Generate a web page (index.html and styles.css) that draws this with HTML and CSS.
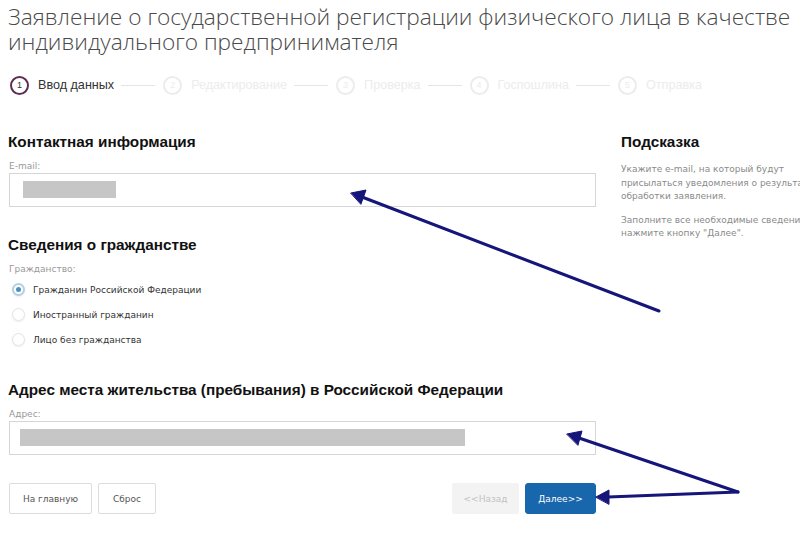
FILE: index.html
```html
<!DOCTYPE html>
<html lang="ru">
<head>
    <meta charset="UTF-8">
    <title>Заявление о государственной регистрации</title>
    <link rel="stylesheet" href="styles.css">
</head>
<body>
    <div class="page">
        <h1 class="title">Заявление о государственной регистрации физического лица в качестве индивидуального предпринимателя</h1>

        <div class="steps">
            <div class="step active"><span class="num">1</span>Ввод данных</div>
            <span class="sep"></span>
            <div class="step"><span class="num">2</span>Редактирование</div>
            <span class="sep"></span>
            <div class="step"><span class="num">3</span>Проверка</div>
            <span class="sep"></span>
            <div class="step"><span class="num">4</span>Госпошлина</div>
            <span class="sep"></span>
            <div class="step"><span class="num">5</span>Отправка</div>
        </div>

        <div class="layout">
            <div class="form">
                <div class="block">
                    <h2>Контактная информация</h2>
                    <div class="label">E-mail:</div>
                    <div class="input"><span class="mask" style="width: 93px"></span></div>
                </div>

                <div class="block">
                    <h2>Сведения о гражданстве</h2>
                    <div class="label">Гражданство:</div>
                    <div class="radio checked"><span class="dot"></span>Гражданин Российской Федерации</div>
                    <div class="radio"><span class="dot"></span>Иностранный гражданин</div>
                    <div class="radio"><span class="dot"></span>Лицо без гражданства</div>
                </div>

                <div class="block">
                    <h2>Адрес места жительства (пребывания) в Российской Федерации</h2>
                    <div class="label">Адрес:</div>
                    <div class="input address"><span class="mask" style="width: 445px"></span></div>
                </div>

                <div class="actions">
                    <button class="btn home">На главную</button>
                    <button class="btn reset">Сброс</button>
                    <span class="spacer"></span>
                    <button class="btn disabled">&lt;&lt;Назад</button>
                    <button class="btn primary">Далее&gt;&gt;</button>
                </div>
            </div>

            <div class="hint">
                <h2>Подсказка</h2>
                <p>Укажите e-mail, на который будут<br>присылаться уведомления о результатах<br>обработки заявления.</p>
                <p>Заполните все необходимые сведения и<br>нажмите кнопку "Далее".</p>
            </div>
        </div>

        <svg class="arrows" viewBox="0 0 800 536" width="800" height="536">
            <g stroke="#15157a" stroke-width="3" stroke-linecap="round" fill="#15157a">
                <line x1="659" y1="311" x2="362" y2="197"/>
                <polygon points="351,193 366,190 361,204" stroke-width="1"/>
                <line x1="738" y1="492" x2="579" y2="438"/>
                <polygon points="567,434 582,431 578,445" stroke-width="1"/>
                <line x1="738" y1="492" x2="608" y2="497"/>
                <polygon points="596,497 609,490 609,504" stroke-width="1"/>
            </g>
        </svg>
    </div>
</body>
</html>
```

FILE: styles.css
```css
body {
    margin: 0;
    padding: 0;
    background-color: #fff;
    font-family: "DejaVu Sans", Tahoma, sans-serif;
    color: #333;
    overflow: hidden;
}

.page {
    position: relative;
    width: 800px;
    height: 536px;
    padding: 4px 0 0 8px;
    box-sizing: border-box;
    overflow: hidden;
}

.title {
    margin: 0;
    font-family: "Open Sans", sans-serif;
    font-weight: 300;
    font-size: 22.7px;
    line-height: 25px;
    color: #4a4a4a;
    width: 790px;
}

.steps {
    display: flex;
    align-items: center;
    margin-top: 21px;
    height: 20px;
    font-family: "Liberation Sans", Arial, sans-serif;
    font-size: 12.6px;
    color: #ececec;
    white-space: nowrap;
}

.step {
    display: flex;
    align-items: center;
}

.step .num {
    width: 15px;
    height: 15px;
    border: 2px solid #ececec;
    border-radius: 50%;
    display: flex;
    align-items: center;
    justify-content: center;
    font-size: 9px;
    margin-right: 9px;
}

.step.active .num {
    margin-left: 2px;
    border-color: #5e2d52;
    color: #333;
}

.step.active {
    color: #333;
}

.sep {
    width: 34px;
    height: 1px;
    background-color: #e4e4e4;
    margin: 0 8px 0 7px;
}

.layout {
    display: flex;
    gap: 25px;
    margin-top: 38px;
}

.form {
    width: 588px;
    flex-shrink: 0;
}

h2 {
    margin: 0;
    font-family: "Liberation Sans", Arial, sans-serif;
    font-weight: bold;
    font-size: 15.3px;
    line-height: 18px;
    color: #111;
}

.block + .block {
    margin-top: 29px;
}

.label {
    margin: 9px 0 1px 1px;
    font-size: 9px;
    line-height: 12px;
    color: #999;
}

.input {
    height: 34px;
    border: 1px solid #d6d6d6;
    padding: 7px 13px;
    box-sizing: border-box;
    margin-left: 1px;
}

.input.address {
    padding-left: 10px;
}

.mask {
    display: block;
    height: 17px;
    background-color: #c6c6c6;
}

.radio {
    display: flex;
    align-items: center;
    height: 25px;
    font-size: 9px;
    color: #333;
}

.block .label + .radio {
    margin-top: 2px;
}

.radio .dot {
    width: 13px;
    height: 13px;
    border: 1px solid #e2e2e2;
    border-radius: 50%;
    box-shadow: 0 1px 2px rgba(0, 0, 0, 0.08);
    margin: 0 8px 0 4px;
    box-sizing: border-box;
    position: relative;
}

.radio.checked .dot {
    border: 2px solid #b3d1e3;
    background-color: #fff;
}

.radio.checked .dot::after {
    content: "";
    position: absolute;
    left: 2px;
    top: 2px;
    width: 5px;
    height: 5px;
    border-radius: 50%;
    background-color: #4f8fbf;
}

.actions {
    display: flex;
    gap: 6px;
    margin-top: 28px;
    margin-left: 1px;
}

.spacer {
    flex: 1;
}

.btn {
    height: 31px;
    padding: 0;
    border: 1px solid #dcdcdc;
    border-radius: 2px;
    background-color: #fff;
    font-family: "DejaVu Sans", Tahoma, sans-serif;
    font-size: 9px;
    color: #555;
}

.btn.home {
    width: 83px;
}

.btn.reset {
    width: 58px;
}

.btn.disabled {
    border-color: #f3f3f3;
    background-color: #f3f3f3;
    color: #c2c2c2;
    width: 67px;
}

.btn.primary {
    border-color: #1866ab;
    background-color: #1866ab;
    color: #fff;
    border-radius: 3px;
    width: 71px;
}

.hint {
    white-space: nowrap;
}

.hint p {
    margin: 12px 0 0;
    font-size: 9px;
    line-height: 13.5px;
    color: #8a8a8a;
}

.hint p + p {
    margin-top: 10px;
}

.arrows {
    position: absolute;
    left: 0;
    top: 0;
    pointer-events: none;
}
```
